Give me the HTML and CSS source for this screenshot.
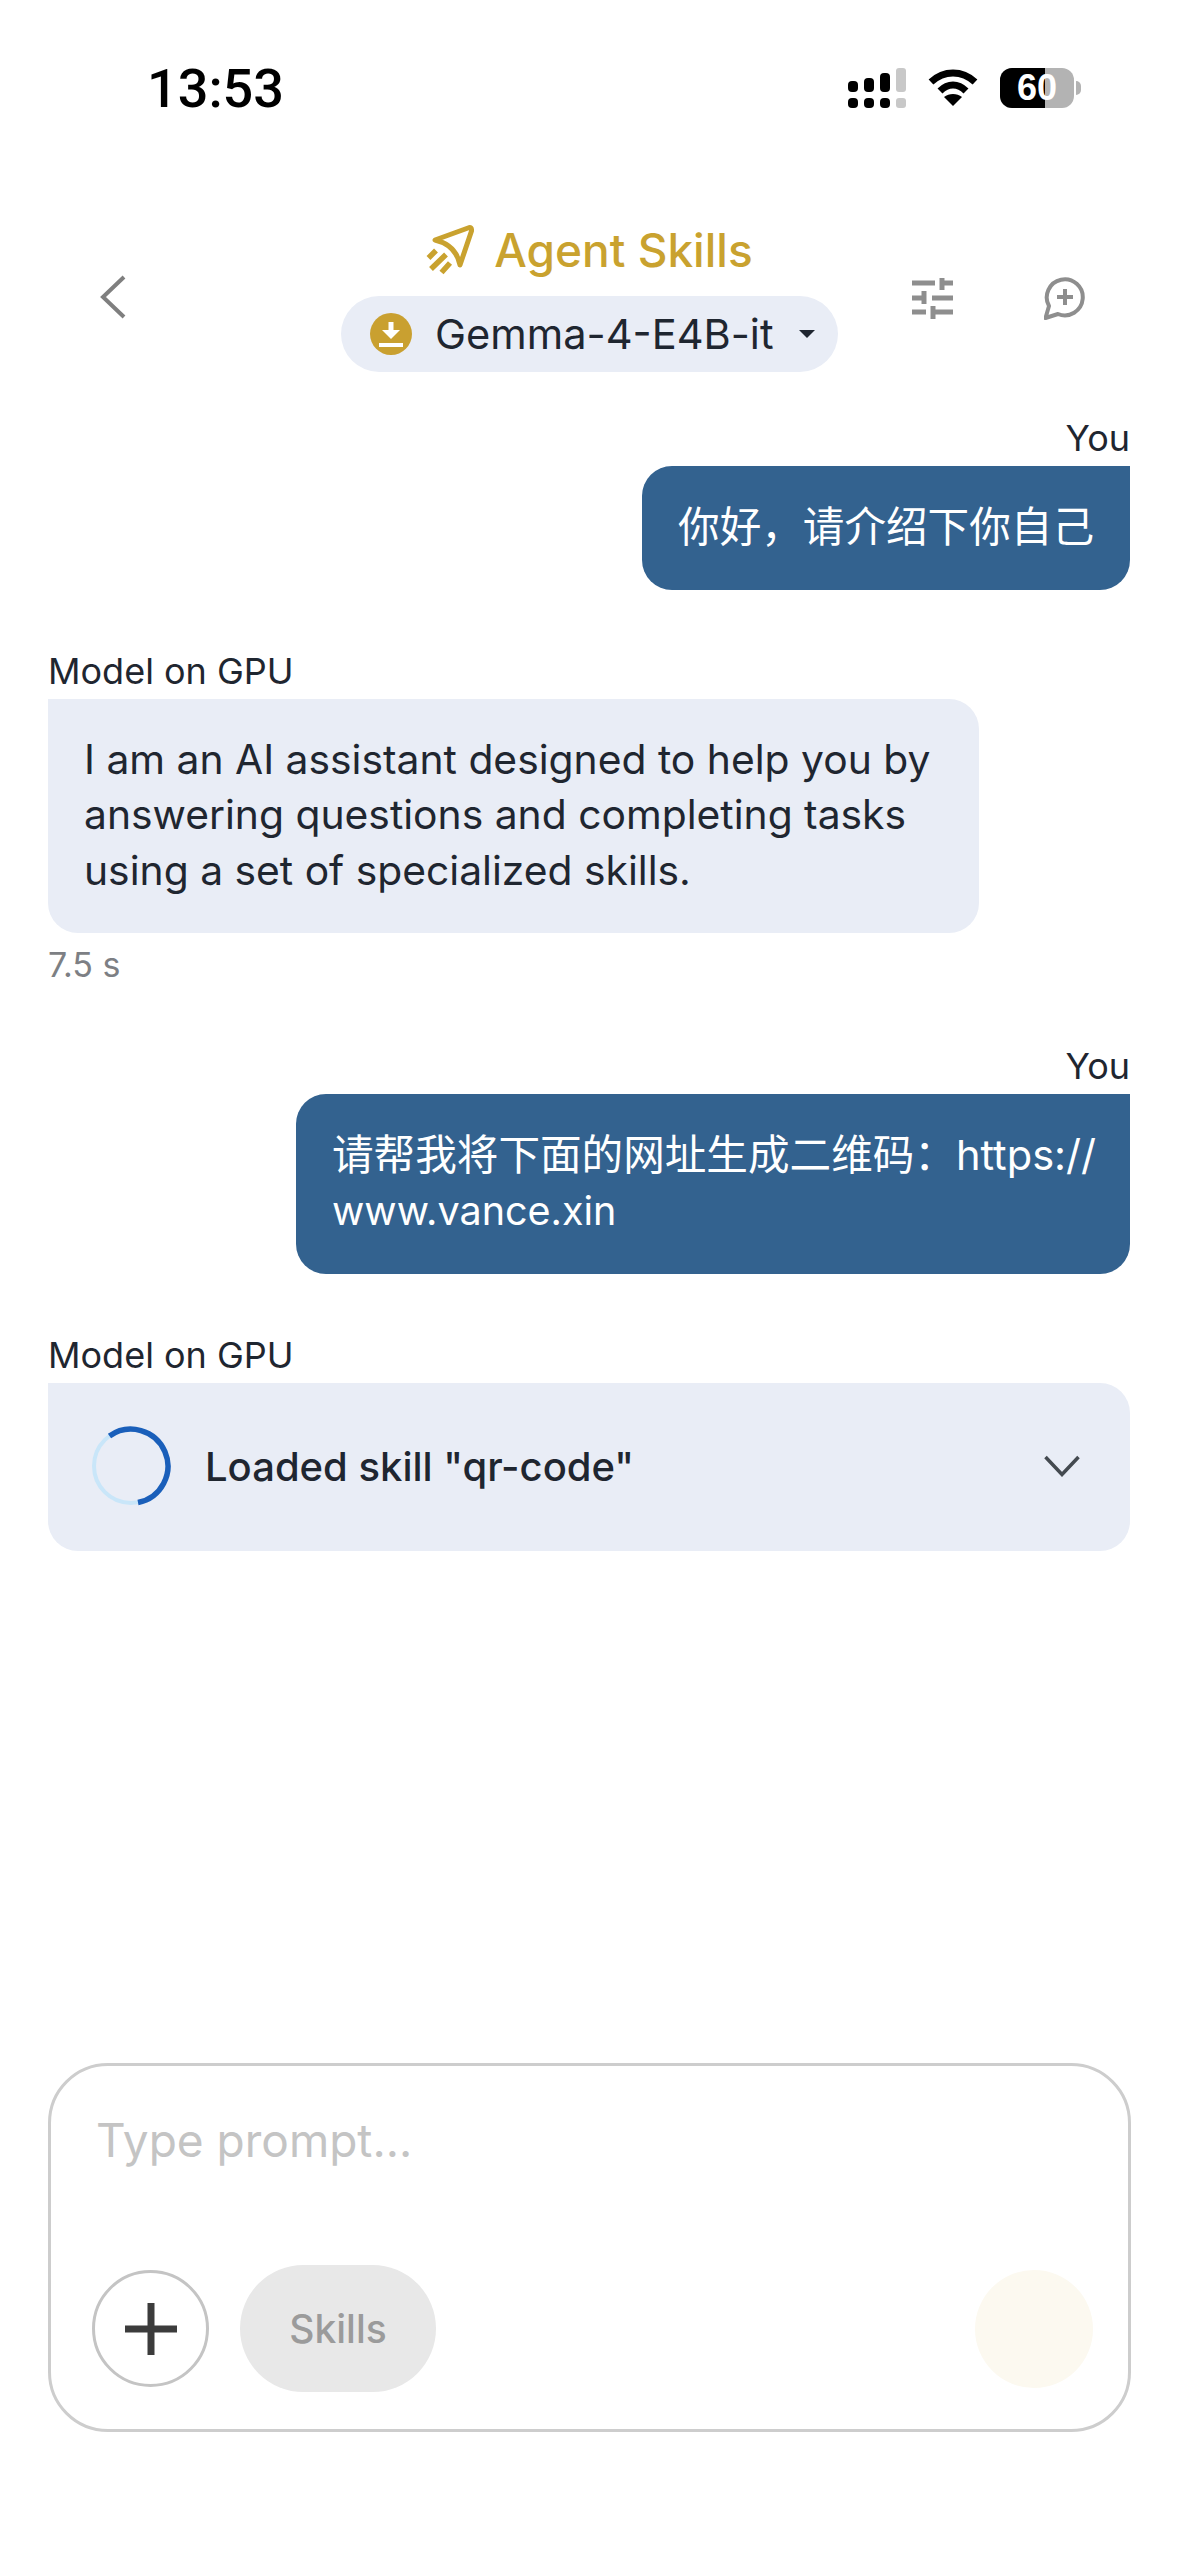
FILE: index.html

```html
<!DOCTYPE html>
<html lang="zh-CN">
<head>
  <meta charset="UTF-8">
  <title>Agent Skills</title>
  <meta name="viewport" content="width=device-width, initial-scale=1.0">
  <link rel="stylesheet" href="styles.css">
</head>
<body>
  <div class="status-bar">
    <span class="clock">13:53</span>
    <div class="status-icons">
      <svg class="signal" width="58" height="40" viewBox="0 0 58 40">
        <rect x="0" y="13" width="10" height="11" rx="4" fill="#000"/>
        <rect x="16" y="10" width="10" height="14" rx="4" fill="#000"/>
        <rect x="32" y="5" width="10" height="19" rx="4" fill="#000"/>
        <rect x="48" y="0" width="10" height="24" rx="3" fill="#c8c8c8"/>
        <rect x="0" y="30" width="10" height="10" rx="4" fill="#000"/>
        <rect x="16" y="30" width="10" height="10" rx="4" fill="#000"/>
        <rect x="32" y="30" width="10" height="10" rx="4" fill="#000"/>
        <rect x="48" y="30" width="10" height="10" rx="3" fill="#c8c8c8"/>
      </svg>
      <svg class="wifi" width="50" height="38" viewBox="0 0 50 38">
        <path d="M3 13 C16 1 34 1 47 13" fill="none" stroke="#000" stroke-width="7"/>
        <path d="M12 22 C20 14 30 14 38 22" fill="none" stroke="#000" stroke-width="7"/>
        <path d="M25 37 L16 28 C21 24 29 24 34 28 Z" fill="#000"/>
      </svg>
      <div class="battery">
        <div class="battery-body">
          <div class="battery-fill"></div>
          <span class="battery-num">60</span>
        </div>
        <div class="battery-tip"></div>
      </div>
    </div>
  </div>

  <div class="top-bar">
    <button class="icon-btn back-btn">
      <svg width="26" height="44" viewBox="0 0 26 44"><path d="M24 2 L3 22 L24 42" fill="none" stroke="#7f7f7f" stroke-width="4"/></svg>
    </button>
    <div class="title-block">
      <div class="title">
        <svg width="48" height="50" viewBox="8 8 48 50">
          <path d="M17 23 L50 11 Q54 9.500 53.500 14 L42 48 Q38 28 17 23 Z" fill="none" stroke="#c9a22f" stroke-width="5" stroke-linejoin="round"/>
          <path d="M10.500 41 L18 33.500 M13 52 L28 37.500 M23.500 55.500 L32 46" fill="none" stroke="#c9a22f" stroke-width="5.500"/>
        </svg>
        <span>Agent Skills</span>
      </div>
      <div class="model-chip">
        <span class="chip-icon">
          <svg width="26" height="28" viewBox="0 0 26 28">
            <path d="M13 2 V14" stroke="#fff" stroke-width="5" fill="none"/>
            <path d="M4 10 L13 19 L22 10 Z" fill="#fff"/>
            <rect x="1" y="23" width="24" height="4" fill="#fff"/>
          </svg>
        </span>
        <span class="chip-name">Gemma-4-E4B-it</span>
        <span class="chip-caret"></span>
      </div>
    </div>
    <div class="top-actions">
      <svg width="42" height="42" viewBox="0 0 42 42">
        <g fill="none" stroke="#8e8e8e" stroke-width="5">
          <path d="M0 5 H23 M30 5 H41"/>
          <path d="M30 0 V12"/>
          <path d="M0 20 H11 M20 20 H41"/>
          <path d="M12 13 V26"/>
          <path d="M0 34 H14 M21 34 H41"/>
          <path d="M21 28 V41"/>
        </g>
      </svg>
      <svg width="44" height="44" viewBox="0 0 44 44">
        <path d="M1.500 41 L5 29 A18 18 0 1 1 14 37 Z" fill="none" stroke="#8e8e8e" stroke-width="4" stroke-linejoin="round"/>
        <path d="M21 12 V28 M13 20 H29" fill="none" stroke="#8e8e8e" stroke-width="4"/>
      </svg>
    </div>
  </div>

  <div class="chat">
    <div class="msg msg-user">
      <div class="msg-label">You</div>
      <div class="bubble bubble-user">你好，请介绍下你自己</div>
    </div>

    <div class="msg msg-model">
      <div class="msg-label">Model on GPU</div>
      <div class="bubble bubble-model">I am an AI assistant designed to help you by answering questions and completing tasks using a set of specialized skills.</div>
      <div class="msg-time">7.5 s</div>
    </div>

    <div class="msg msg-user">
      <div class="msg-label">You</div>
      <div class="bubble bubble-user bubble-wide">请帮我将下面的网址生成二维码：https://<br><span class="url-tail">www.vance.xin</span></div>
    </div>

    <div class="msg msg-model">
      <div class="msg-label">Model on GPU</div>
      <div class="skill-card">
        <svg class="spinner" width="80" height="80" viewBox="0 0 80 80">
          <circle cx="40" cy="40" r="37" fill="none" stroke="#c9e6f9" stroke-width="4"/>
          <path d="M18.500 10 A37 37 0 1 1 47 76.500" fill="none" stroke="#1a5fba" stroke-width="5.500"/>
        </svg>
        <span class="skill-text">Loaded skill "qr-code"</span>
        <svg class="skill-chevron" width="36" height="22" viewBox="0 0 36 22"><path d="M1.500 2 L18 19.500 L34.500 2" fill="none" stroke="#444a50" stroke-width="3.500"/></svg>
      </div>
    </div>
  </div>

  <div class="input-box">
    <div class="placeholder">Type prompt...</div>
    <div class="input-tools">
      <button class="add-btn">
        <svg width="52" height="52" viewBox="0 0 52 52"><path d="M26 0 V52 M0 26 H52" stroke="#3c3c3c" fill="none" stroke-width="7"/></svg>
      </button>
      <button class="skills-btn">Skills</button>
      <div class="send-btn"></div>
    </div>
  </div>
</body>
</html>
```

FILE: styles.css

```css
* {
  box-sizing: border-box;
}
body {
  font-family: 'Inter', 'Noto Sans CJK SC', sans-serif;
  margin: 0;
  height: 2556px;
  overflow: hidden;
  background: #fff;
  color: #1f2630;
  display: flex;
  flex-direction: column;
}
button {
  border: none;
  background: none;
  padding: 0;
  font-family: inherit;
}

/* status bar */
.status-bar {
  height: 176px;
  padding: 0 98px 0 147px;
  display: flex;
  justify-content: space-between;
  align-items: center;
  flex: none;
}
.clock {
  font-family: 'Roboto', sans-serif;
  font-weight: 500;
  font-size: 54px;
  color: #000;
}
.status-icons {
  display: flex;
  align-items: center;
  gap: 22px;
}
.battery {
  display: flex;
  align-items: center;
  gap: 2px;
}
.battery-body {
  position: relative;
  width: 74px;
  height: 40px;
  background: #b3b3b3;
  border-radius: 12px;
  overflow: hidden;
}
.battery-fill {
  width: 45px;
  height: 100%;
  background: #000;
}
.battery-num {
  position: absolute;
  left: 0;
  right: 0;
  top: 0;
  line-height: 40px;
  text-align: center;
  color: #fff;
  font-family: 'Liberation Sans', sans-serif;
  font-weight: 700;
  font-size: 36px;
}
.battery-tip {
  width: 5px;
  height: 14px;
  background: #b3b3b3;
  border-radius: 0 5px 5px 0;
}

/* header */
.top-bar {
  position: relative;
  flex: none;
  height: 232px;
  padding: 0 91px 0 100px;
  display: flex;
  justify-content: space-between;
  align-items: flex-start;
}
.back-btn {
  margin-top: 99px;
  display: flex;
}
.title-block {
  position: absolute;
  left: 341px;
  top: 44px;
  width: 497px;
  display: flex;
  flex-direction: column;
  align-items: center;
  gap: 16px;
}
.title {
  height: 60px;
  display: flex;
  align-items: center;
  gap: 20px;
  color: #c9a22f;
  font-size: 46px;
  font-weight: 500;
}
.model-chip {
  width: 100%;
  height: 76px;
  border-radius: 38px;
  background: #e9edf6;
  padding: 0 23px 0 29px;
  display: flex;
  align-items: center;
}
.chip-icon {
  width: 42px;
  height: 42px;
  border-radius: 50%;
  background: #c9a030;
  display: flex;
  align-items: center;
  justify-content: center;
  flex: none;
}
.chip-name {
  margin-left: 23px;
  font-size: 41.600px;
  color: #1f2630;
  white-space: nowrap;
}
.chip-caret {
  margin-left: auto;
  width: 0;
  height: 0;
  border-left: 8px solid transparent;
  border-right: 8px solid transparent;
  border-top: 8px solid #1f2630;
}
.top-actions {
  margin-top: 101px;
  display: flex;
  gap: 90px;
  align-items: center;
}

/* chat */
.chat {
  flex: 1;
  padding: 10px 49px 0 48px;
  display: flex;
  flex-direction: column;
  gap: 61px;
}
.msg {
  display: flex;
  flex-direction: column;
}
.msg-user {
  align-items: flex-end;
}
.msg-model {
  align-items: flex-start;
}
.msg-label {
  font-size: 36px;
  line-height: 40px;
  height: 48px;
  color: #1f2630;
}
.msg-time {
  font-size: 34px;
  line-height: 40px;
  margin-top: 12px;
  color: #7d7f84;
}
.bubble {
  line-height: 55.500px;
}
.bubble-user {
  background: #33628f;
  color: #fff;
  font-size: 41.600px;
  padding: 33.500px 36px 34.500px;
  border-radius: 30px 0 30px 30px;
  white-space: nowrap;
}
.url-tail {
  font-size: 39.500px;
}
.bubble-wide {
  width: 834px;
}
.bubble-model {
  background: #e9edf6;
  font-size: 40.800px;
  width: 931px;
  padding: 33px 36px 35px;
  border-radius: 0 30px 30px 30px;
}
.skill-card {
  width: 100%;
  height: 168px;
  background: #e9edf6;
  border-radius: 0 30px 30px 30px;
  padding: 0 50px 2px 43px;
  display: flex;
  align-items: center;
}
.spinner {
  flex: none;
}
.skill-text {
  margin-left: 34px;
  font-size: 40px;
  font-weight: 500;
}
.skill-chevron {
  margin-left: auto;
}

/* input */
.input-box {
  flex: none;
  margin: 0 48px 124px 48px;
  height: 369px;
  border: 3px solid #cdcdcd;
  border-radius: 60px;
  padding: 46px 35px 37px 41px;
  display: flex;
  flex-direction: column;
  justify-content: space-between;
}
.placeholder {
  font-size: 46px;
  line-height: 56px;
  padding-left: 4px;
  color: #c4c4c4;
}
.input-tools {
  display: flex;
  align-items: center;
  gap: 31px;
}
.add-btn {
  width: 117px;
  height: 117px;
  border-radius: 50%;
  border: 3px solid #c4c4c4;
  display: flex;
  align-items: center;
  justify-content: center;
}
.skills-btn {
  width: 196px;
  height: 127px;
  border-radius: 64px;
  background: #e8e8e8;
  color: #9b9b9b;
  font-size: 39px;
  font-weight: 500;
}
.send-btn {
  margin-left: auto;
  width: 118px;
  height: 118px;
  border-radius: 50%;
  background: #fcf9f0;
}
```
